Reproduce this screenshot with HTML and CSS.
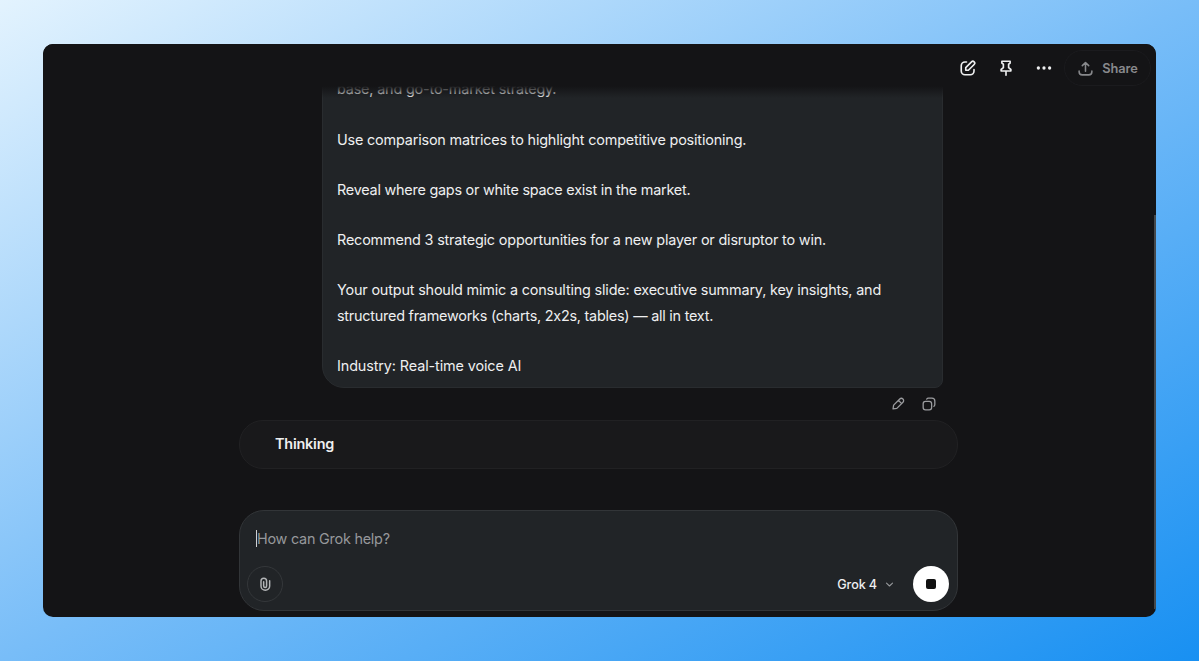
FILE: index.html
```html
<!DOCTYPE html>
<html lang="en">

<head>
    <meta charset="UTF-8">
    <meta name="viewport" content="width=device-width, initial-scale=1.0">
    <title>Grok</title>
    <link rel="stylesheet" href="styles.css">
</head>

<body>

    <div class="window">
        <header class="topbar">
            <button class="icon-btn" aria-label="New chat">
                <svg width="18" height="18" viewBox="0 0 24 24">
                    <path d="M10 4H8a5 5 0 0 0-5 5v7a5 5 0 0 0 5 5h7a5 5 0 0 0 5-5v-2" />
                    <path d="M9 15v-3.500l7.700-7.700a2.450 2.450 0 0 1 3.500 3.500L12.500 15z" />
                </svg>
            </button>
            <button class="icon-btn" aria-label="Pin">
                <svg width="18" height="18" viewBox="0 0 24 24">
                    <path d="M6.500 3h11v2.500l-2 1.500v4.500l3 2.500v2h-13v-2l3-2.500V7l-2-1.500zM12 16v5.500" />
                </svg>
            </button>
            <button class="icon-btn" aria-label="More">
                <svg class="filled" width="18" height="18" viewBox="0 0 24 24">
                    <circle cx="4.500" cy="12" r="2.200" />
                    <circle cx="12" cy="12" r="2.200" />
                    <circle cx="19.500" cy="12" r="2.200" />
                </svg>
            </button>
            <button class="share-btn">
                <svg width="17" height="17" viewBox="0 0 24 24">
                    <path d="M12 16V3.500M7.500 8L12 3.500 16.500 8M3 15.500v1A4.500 4.500 0 0 0 7.500 21h9a4.500 4.500 0 0 0 4.500-4.500v-1" />
                </svg>
                <span>Share</span>
            </button>
        </header>

        <main class="thread">
            <div class="message">
                <p>base, and go-to-market strategy.</p>
                <p>Use comparison matrices to highlight competitive positioning.</p>
                <p class="tight">Reveal where gaps or white space exist in the market.</p>
                <p>Recommend 3 strategic opportunities for a new player or disruptor to win.</p>
                <p>Your output should mimic a consulting slide: executive summary, key insights, and<br><span class="tight">structured frameworks (charts, 2x2s, tables) — all in text.</span></p>
                <p class="loose">Industry: Real-time voice AI</p>
            </div>
            <div class="message-actions">
                <svg width="14" height="14" viewBox="0 0 24 24">
                    <path d="M3.500 20.500l1-6.500L15 3.500a3.500 3.500 0 0 1 5.500 5.500L10 19.500zM13 6l5 5" />
                </svg>
                <svg width="14" height="14" viewBox="0 0 24 24">
                    <rect x="2" y="7.500" width="14.500" height="14.500" rx="4" />
                    <path d="M8 3.500a4 4 0 0 1 3-1.500h6a5 5 0 0 1 5 5v6a4 4 0 0 1-1.500 3" />
                </svg>
            </div>
            <div class="thinking">Thinking</div>
        </main>

        <div class="composer">
            <div class="prompt"><span class="caret"></span>How can Grok help?</div>
            <div class="composer-row">
                <button class="attach-btn" aria-label="Attach">
                    <svg width="16" height="16" viewBox="0 0 24 24">
                        <path d="M10 8.500v6.500a2.200 2.200 0 0 0 4.400 0V7.500a4.200 4.200 0 0 0-8.400 0V15a6.500 6.500 0 0 0 13 0V7" />
                    </svg>
                </button>
                <button class="model-btn">
                    <span>Grok 4</span>
                    <svg width="9" height="9" viewBox="0 0 24 24">
                        <path d="M4 8.500l8 7.500 8-7.500" />
                    </svg>
                </button>
                <button class="stop-btn" aria-label="Stop"><span class="stop-icon"></span></button>
            </div>
        </div>

        <div class="scrollbar"></div>
    </div>

</body>

</html>
```
FILE: styles.css
```css
/* --- Page --- */
* {
    box-sizing: border-box;
}

body {
    margin: 0;
    height: 100vh;
    padding: 44px 43px;
    overflow: hidden;
    font-family: Inter, "Liberation Sans", sans-serif;
    font-feature-settings: "calt" 0;
    background: linear-gradient(to bottom right, #e3f3fe 0%, #78bdf8 50%, #1890f2 100%);
}

button {
    display: flex;
    align-items: center;
    justify-content: center;
    padding: 0;
    border: none;
    background: none;
    color: inherit;
    font: inherit;
}

svg {
    display: block;
    flex-shrink: 0;
    fill: none;
    stroke: currentColor;
    stroke-width: 2.2;
    stroke-linecap: round;
    stroke-linejoin: round;
}

svg.filled {
    fill: currentColor;
    stroke: none;
}

/* --- App window --- */
.window {
    position: relative;
    display: flex;
    flex-direction: column;
    width: 1113px;
    height: 573px;
    padding: 0 198px 6px 196px;
    border-radius: 10px;
    overflow: hidden;
    background: #141416;
    color: #eeeff0;
}

/* --- Top bar, floats over the scrolled thread --- */
.topbar {
    position: absolute;
    z-index: 2;
    top: 0;
    left: 0;
    right: 0;
    display: flex;
    align-items: center;
    justify-content: flex-end;
    height: 54px;
    padding: 0 5px 6px 0;
    background: linear-gradient(#141416 78%, rgba(20, 20, 22, 0));
}

.icon-btn {
    width: 38px;
    height: 36px;
}

.share-btn {
    gap: 8px;
    width: 87px;
    height: 36px;
    margin-left: 1px;
    border: 1px solid #1b1b1e;
    border-radius: 18px;
    color: #88898c;
    font-size: 12.8px;
    font-weight: 600;
    letter-spacing: -0.1px;
}

/* --- Thread --- */
.thread {
    display: flex;
    flex: 1;
    flex-direction: column;
    justify-content: flex-end;
    min-height: 0;
    padding-bottom: 41px;
}

.message {
    align-self: flex-end;
    width: 621px;
    margin-right: 15px;
    padding: 10px 14px 9px;
    border: 1px solid #292c2f;
    border-radius: 22px 22px 8px 22px;
    background: #212427;
    font-size: 14.4px;
    line-height: 25.150px;
    letter-spacing: -0.170px;
    white-space: nowrap;
}

.message p {
    margin: 0 0 25.150px;
}

.message p:last-child {
    margin-bottom: 0;
}

.tight {
    letter-spacing: -0.230px;
}

.loose {
    letter-spacing: -0.110px;
}

.message-actions {
    display: flex;
    align-items: center;
    gap: 17px;
    height: 32px;
    padding: 0 22px 0 0;
    justify-content: flex-end;
    color: #9b9c9f;
}

.thinking {
    display: flex;
    align-items: center;
    height: 49px;
    padding: 0 35px 2px;
    border: 1px solid #212123;
    border-radius: 24px;
    background: #19191b;
    font-size: 14.4px;
    font-weight: 600;
    letter-spacing: -0.2px;
}

/* --- Composer --- */
.composer {
    display: flex;
    flex-direction: column;
    justify-content: space-between;
    height: 101px;
    padding: 16px 8px 8px 7px;
    border: 1px solid #323538;
    border-radius: 25px;
    background: #212427;
}

.prompt {
    display: flex;
    align-items: center;
    height: 22px;
    padding-left: 9px;
    color: #96989b;
    font-size: 14.4px;
    letter-spacing: -0.230px;
}

.caret {
    width: 1px;
    height: 17px;
    background: #d0d1d2;
}

.composer-row {
    display: flex;
    align-items: center;
}

.attach-btn {
    width: 36px;
    height: 36px;
    margin-right: auto;
    border: 1px solid #34373a;
    border-radius: 50%;
    color: #b2b4b6;
}

.model-btn {
    gap: 8px;
    margin-right: 19px;
    font-size: 12.6px;
    font-weight: 500;
    letter-spacing: -0.1px;
}

.model-btn svg {
    color: #96989b;
    stroke-width: 3;
}

.stop-btn {
    width: 36px;
    height: 36px;
    border-radius: 50%;
    background: #fff;
}

.stop-icon {
    width: 10px;
    height: 10px;
    border-radius: 2px;
    background: #111;
}

/* --- Scrollbar thumb on the window edge --- */
.scrollbar {
    position: absolute;
    top: 171px;
    right: 0;
    bottom: 8px;
    width: 2px;
    background: #45484b;
}
```
